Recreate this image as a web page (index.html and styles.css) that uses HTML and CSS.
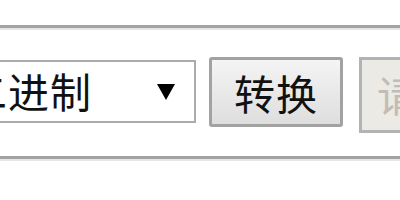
FILE: index.html
```html
<!DOCTYPE html>
<html>
  <head>
    <title>进制转换</title>
    <link rel="stylesheet" href="styles.css">
  </head>

  <body>
    <div class="panel">
      <div class="controls">
        <div class="base-select">
          <span class="base-label">二进制</span>
          <span class="arrow"></span>
        </div>
        <button class="convert-btn">转换</button>
        <div class="result-box">请输入</div>
      </div>
    </div>
  </body>
</html>
```

FILE: styles.css
```css
body {
  font-family: "Noto Sans CJK SC", "Noto Sans", sans-serif;
  background-color: white;
  margin: 0;
  overflow: hidden;
  width: 400px;
  height: 200px;
}

.panel {
  margin-top: 25px;
  height: 128px;
  border-top: 3px solid #a3a3a3;
  border-bottom: 3px solid #a3a3a3;
  box-shadow: inset 0 2px 0 #e6e6e6, 0 2px 0 #e6e6e6;
}

.controls {
  display: flex;
  align-items: flex-start;
  padding-top: 29px;
  white-space: nowrap;
}

.controls > * {
  flex-shrink: 0;
}

.base-select {
  display: flex;
  align-items: center;
  box-sizing: border-box;
  width: 236px;
  height: 63px;
  margin-left: -40px;
  margin-top: 3px;
  padding-left: 4px;
  border: 2px solid #ababab;
  background: white;
  color: #111;
  font-size: 41px;
  line-height: 1;
}

.base-label {
  letter-spacing: 1px;
  margin-top: -2px;
}

.arrow {
  width: 0;
  height: 0;
  margin-left: auto;
  margin-right: 19px;
  border-left: 9px solid transparent;
  border-right: 9px solid transparent;
  border-top: 16px solid #000;
}

.convert-btn {
  box-sizing: border-box;
  width: 134px;
  height: 70px;
  margin-left: 13px;
  padding: 0;
  border: 3px solid #a2a2a2;
  border-radius: 3px;
  background: linear-gradient(#f4f4f4, #dedede);
  color: #111;
  font-family: inherit;
  font-size: 41px;
  line-height: 1;
  letter-spacing: 1px;
}

.result-box {
  box-sizing: border-box;
  height: 76px;
  margin-left: 16px;
  padding-left: 15px;
  padding-top: 13px;
  border: 3px solid #b3b3b3;
  background: #ebeae4;
  color: #c3bcb4;
  font-size: 42px;
  line-height: 1;
}
```
